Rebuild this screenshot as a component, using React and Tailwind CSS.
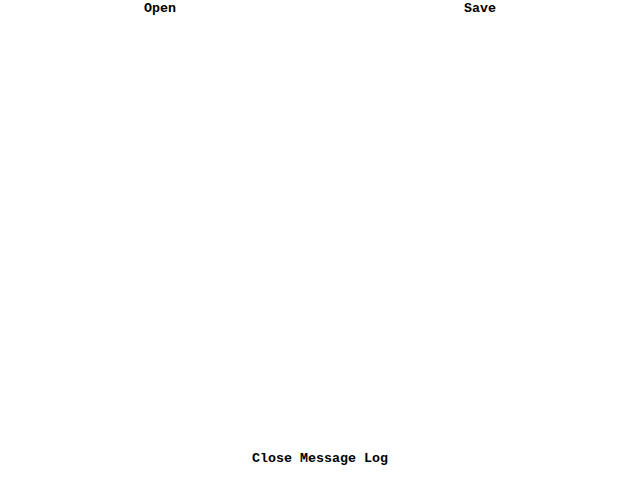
export default function App() {
  return (
    <div className="h-screen w-full bg-white text-black flex flex-col justify-between font-['Liberation_Mono',monospace] font-bold text-[13.33px] leading-4">
      <div className="grid grid-cols-2 pt-px">
        <button className="text-center">Open</button>
        <button className="text-center">Save</button>
      </div>
      <div className="flex justify-center pb-[13px]">
        <button>Close Message Log</button>
      </div>
    </div>
  );
}
